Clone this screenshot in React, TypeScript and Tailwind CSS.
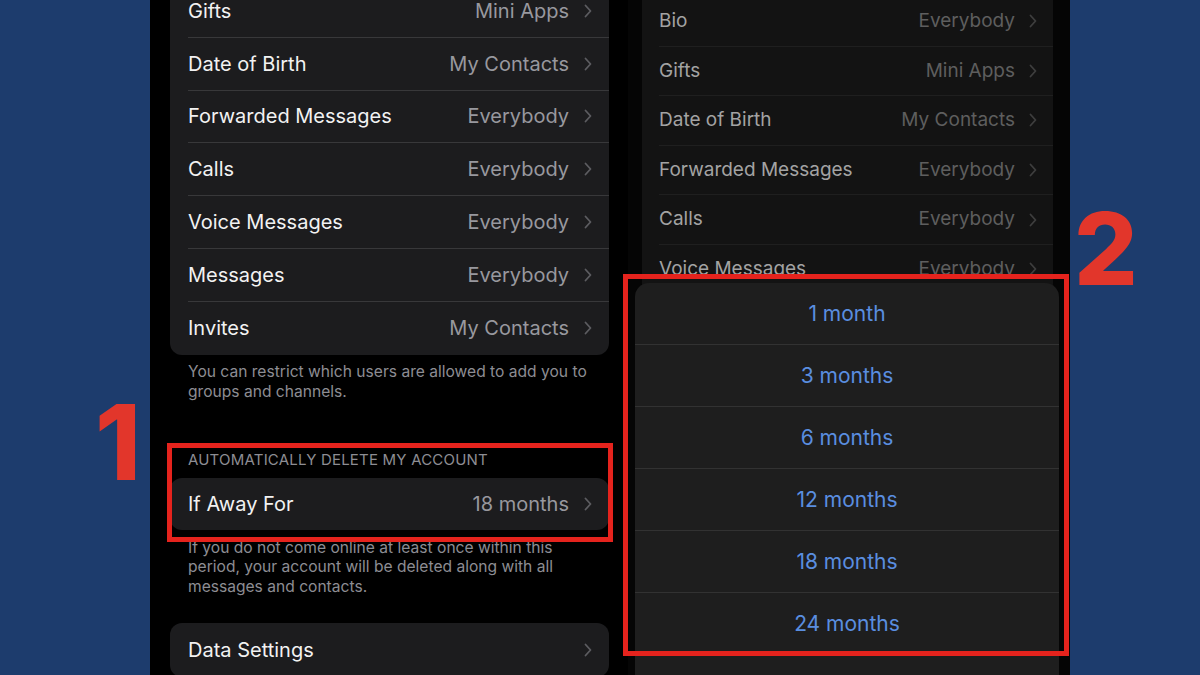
import React from "react";

const font = { fontFamily: "Inter, 'Noto Sans', Arial, sans-serif" };

function Chevron({ className = "" }: { className?: string }) {
  return (
    <svg width="8" height="14" viewBox="0 0 8 14" className={className} fill="none">
      <path d="M1.5 1.5 L6.5 7 L1.5 12.5" stroke="currentColor" strokeWidth="1.8" strokeLinecap="round" strokeLinejoin="round" />
    </svg>
  );
}

const leftRows: [string, string][] = [
  ["Gifts", "Mini Apps"],
  ["Date of Birth", "My Contacts"],
  ["Forwarded Messages", "Everybody"],
  ["Calls", "Everybody"],
  ["Voice Messages", "Everybody"],
  ["Messages", "Everybody"],
  ["Invites", "My Contacts"],
];

const rightRows: [string, string][] = [
  ["Bio", "Everybody"],
  ["Gifts", "Mini Apps"],
  ["Date of Birth", "My Contacts"],
  ["Forwarded Messages", "Everybody"],
  ["Calls", "Everybody"],
  ["Voice Messages", "Everybody"],
  ["Messages", "Everybody"],
  ["Invites", "My Contacts"],
];

const options = ["1 month", "3 months", "6 months", "12 months", "18 months", "24 months"];

export default function App() {
  return (
    <div className="relative flex h-[675px] w-[1200px] overflow-hidden bg-[#1d3c6d]" style={font}>
      {/* left blue gutter */}
      <div className="flex w-[150px] shrink-0 flex-col items-end pr-[9px] pt-[390px]">
        <span className="text-[104px] font-extrabold leading-none text-[#e2362b]">1</span>
      </div>

      {/* left phone */}
      <div className="flex w-[478px] shrink-0 flex-col bg-black pl-[20px] pr-[19px]">
        <div className="mt-[-15px] shrink-0 rounded-b-[12px] bg-[#1c1c1e]">
          {leftRows.map(([l, v], i) => (
            <div key={l} className="flex h-[52.8px] items-center pl-[18px]">
              <div className={`flex h-full flex-1 items-center pr-[17px] ${i < leftRows.length - 1 ? "border-b border-[#38383a]" : ""}`}>
                <span className="flex-1 text-[20px] text-[#f2f2f2]">{l}</span>
                <span className="mr-[15px] text-[20px] text-[#98989e]">{v}</span>
                <Chevron className="text-[#5c5c60]" />
              </div>
            </div>
          ))}
        </div>
        <p className="mt-[7px] shrink-0 pl-[18px] pr-[8px] text-[15.6px] leading-[20px] text-[#8d8d93]">
          You can restrict which users are allowed to add you to groups and channels.
        </p>
        <p className="mt-[49px] shrink-0 pl-[18px] text-[15px] leading-[18px] tracking-[0.2px] text-[#8d8d93]">
          AUTOMATICALLY DELETE MY ACCOUNT
        </p>
        <div className="mt-[9px] flex h-[52px] shrink-0 items-center rounded-[12px] bg-[#1c1c1e] pl-[18px] pr-[17px]">
          <span className="flex-1 text-[20px] text-[#f2f2f2]">If Away For</span>
          <span className="mr-[15px] text-[20px] text-[#98989e]">18 months</span>
          <Chevron className="text-[#5c5c60]" />
        </div>
        <p className="mt-[8px] shrink-0 pl-[18px] pr-[40px] text-[15.6px] leading-[19.5px] text-[#8d8d93]">
          If you do not come online at least once within this period, your account will be deleted along with all messages and contacts.
        </p>
        <div className="mt-[27px] flex h-[54px] shrink-0 items-center rounded-[12px] bg-[#1c1c1e] pl-[18px] pr-[17px]">
          <span className="flex-1 text-[20px] text-[#f2f2f2]">Data Settings</span>
          <Chevron className="text-[#5c5c60]" />
        </div>
      </div>

      {/* right phone */}
      <div className="relative flex w-[442px] shrink-0 flex-col bg-[#050505] pl-[14px] pr-[17px]">
        <div className="mt-[-3px] shrink-0 bg-[#131313]">
          {rightRows.map(([l, v], i) => (
            <div key={l + i} className="flex h-[49.6px] items-center pl-[17px]">
              <div className="flex h-full flex-1 items-center border-b border-[#1f1f1f] pr-[16px]">
                <span className="flex-1 text-[19px] text-[#a3a3a3]">{l}</span>
                <span className="mr-[14px] text-[19px] text-[#5e5e5e]">{v}</span>
                <Chevron className="text-[#3e3e3e]" />
              </div>
            </div>
          ))}
        </div>

        {/* action sheet */}
        <div className="absolute left-[7px] top-[283px] w-[424px] rounded-t-[14px] bg-[#1e1e1e] pb-[40px]">
          {options.map((o) => (
            <div key={o} className="flex h-[62px] items-center justify-center border-b border-[#323232] text-[21px] text-[#5a8ee0]">
              {o}
            </div>
          ))}
        </div>
      </div>

      {/* right blue gutter */}
      <div className="flex w-[130px] shrink-0 flex-col items-start pl-[4px] pt-[199px]">
        <span className="text-[100px] font-extrabold leading-none text-[#e2362b]">2</span>
      </div>

      {/* annotation boxes */}
      <div className="pointer-events-none absolute left-[167px] top-[443px] h-[99px] w-[446px] border-[5px] border-[#e5231d]" />
      <div className="pointer-events-none absolute left-[623px] top-[274px] h-[382px] w-[446px] border-[5px] border-[#e5231d]" />
    </div>
  );
}
